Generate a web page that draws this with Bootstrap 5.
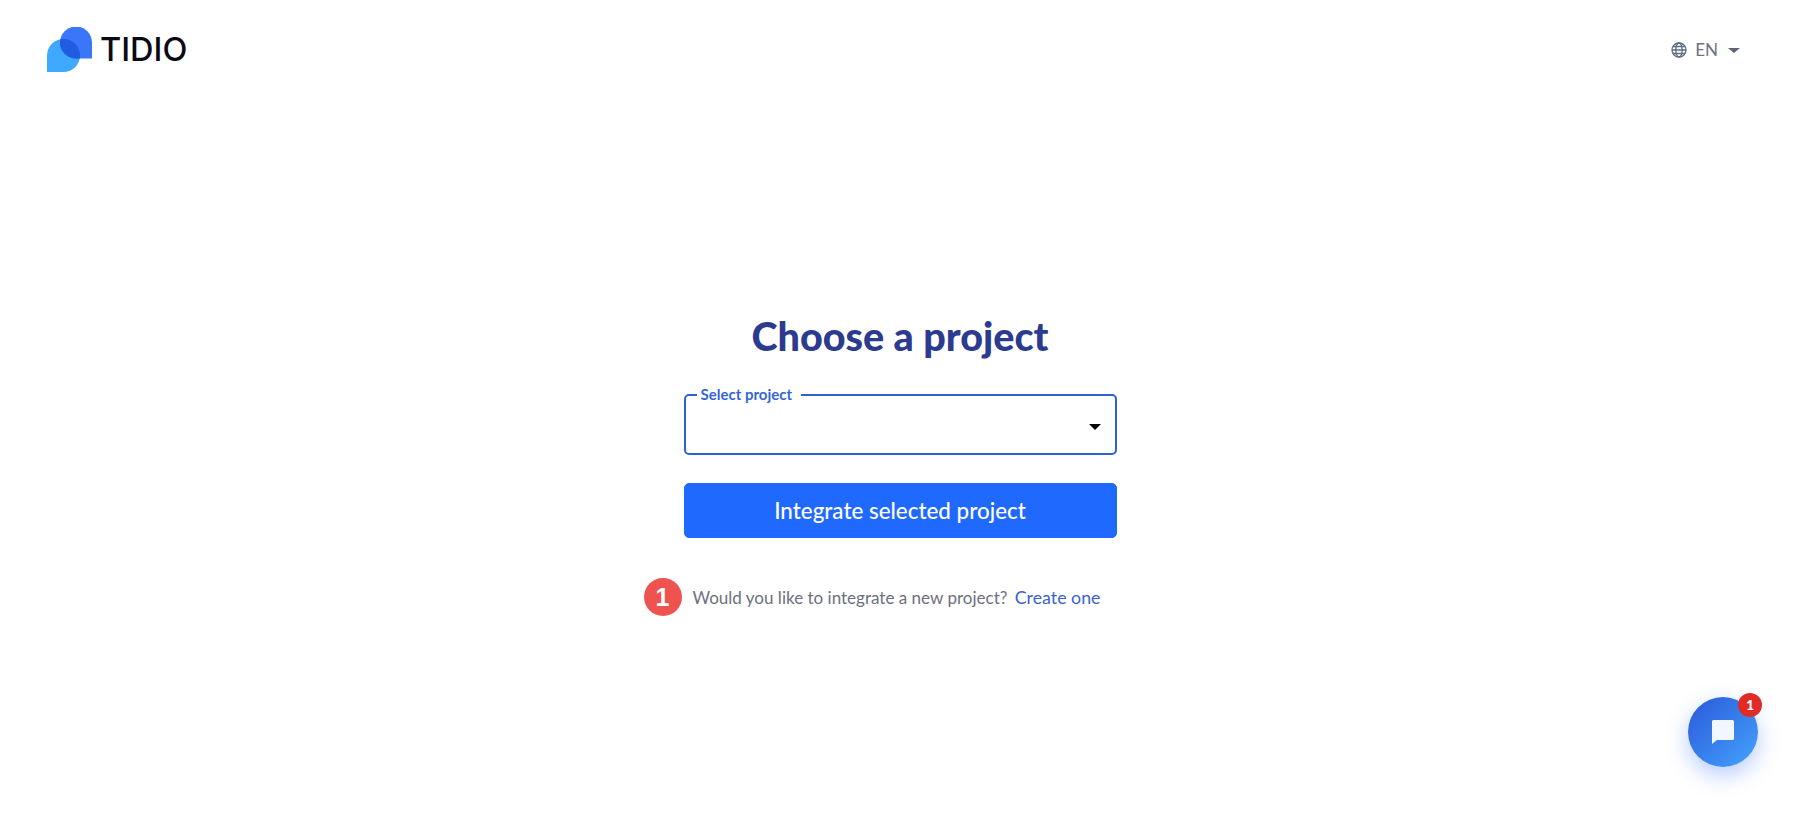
<!DOCTYPE html>
<html lang="en">
<head>
  <meta charset="UTF-8">
  <title>Choose a project</title>
  <link href="https://cdn.jsdelivr.net/npm/bootstrap@5.3.0/dist/css/bootstrap.min.css" rel="stylesheet">
  <style>
    body {
      background: #fff;
      font-family: Lato, "Liberation Sans", sans-serif;
      height: 813px;
      overflow: hidden;
    }

    .top-bar {
      height: 96px;
      padding: 0 60px 0 47px;
    }

    .brand-logo {
      margin-top: 4px;
    }

    .brand-name {
      font-family: Inter, "Liberation Sans", sans-serif;
      font-size: 32.5px;
      font-weight: 500;
      color: #0a0a14;
      line-height: 1;
      margin-left: 8px;
      margin-top: 5px;
    }

    .lang-pick {
      color: #6c7280;
      font-size: 17px;
      margin-top: 4px;
    }

    .lang-caret {
      border-left: 6px solid transparent;
      border-right: 6px solid transparent;
      border-top: 5px solid #5f6673;
      margin-left: 10px;
    }

    .project-box {
      width: 433px;
      margin: 214px auto 0;
    }

    .project-title {
      color: #2c3a8f;
      font-size: 39.5px;
      font-weight: 900;
      line-height: 52px;
      margin-bottom: 24px;
    }

    .project-field {
      height: 69px;
      border: 2px solid #2f62d0;
      border-radius: 5px;
      padding: 0 11px;
      margin: 0;
      min-width: 0;
      position: relative;
    }

    .project-field legend {
      float: none;
      width: auto;
      font-size: 15px;
      font-weight: 700;
      line-height: 16px;
      color: #3566d6;
      padding: 0 9px 2px 4px;
      margin: 0;
    }

    .field-caret {
      position: absolute;
      right: 14px;
      top: 20px;
      border-left: 6px solid transparent;
      border-right: 6px solid transparent;
      border-top: 6px solid #000;
    }

    .integrate-btn {
      display: block;
      width: 100%;
      height: 55px;
      margin-top: 28px;
      background: #1f69ff;
      border-color: #1f69ff;
      border-radius: 5px;
      font-size: 22.4px;
      font-weight: 500;
    }

    .new-project {
      position: relative;
      margin-top: 44px;
      padding-left: 9px;
      font-size: 17.05px;
      line-height: 30px;
      color: #6c7080;
      white-space: nowrap;
    }

    .new-project a {
      color: #3a62cc;
      font-size: 17.8px;
      text-decoration: none;
      margin-left: 3px;
    }

    .step-marker {
      position: absolute;
      left: -40px;
      top: -4px;
      width: 38px;
      height: 38px;
      border-radius: 50%;
      background: #ef5350;
      color: #fff;
      font-family: "Liberation Sans", sans-serif;
      font-size: 25px;
      font-weight: 700;
      line-height: 38px;
      text-align: center;
    }

    .chat-launcher {
      position: fixed;
      left: 1688px;
      top: 697px;
      width: 70px;
      height: 70px;
      border: 0;
      border-radius: 50%;
      background: linear-gradient(135deg, #2a58dc, #45a4fb);
      box-shadow: 0 8px 22px rgba(45, 105, 255, 0.35);
    }

    .chat-count {
      position: absolute;
      left: 50px;
      top: -4px;
      width: 24px;
      height: 24px;
      border-radius: 50%;
      background: #e02b27;
      color: #fff;
      font-size: 14px;
      font-weight: 900;
      line-height: 24px;
      text-align: center;
    }
  </style>
</head>
<body>

  <header class="top-bar d-flex align-items-center justify-content-between">
    <div class="d-flex align-items-center">
      <svg class="brand-logo" width="45" height="46" viewBox="0 0 45 46">
        <defs>
          <clipPath id="frontBubble">
            <path d="M45 31.500H29a16 16 0 1 1 16-16z"/>
          </clipPath>
        </defs>
        <path d="M0 45V28.500a16.500 16.500 0 1 1 16.500 16.500z" fill="#3fa9ff"/>
        <path d="M45 31.500H29a16 16 0 1 1 16-16z" fill="#3a76fa"/>
        <path d="M0 45V28.500a16.500 16.500 0 1 1 16.500 16.500z" fill="#1f5ce2" clip-path="url(#frontBubble)"/>
      </svg>
      <span class="brand-name">TIDIO</span>
    </div>
    <div class="lang-pick d-flex align-items-center">
      <svg class="me-2" width="16" height="16" viewBox="0 0 16 16" fill="none" stroke="#5f6b80" stroke-width="1.300">
        <circle cx="8" cy="8" r="7"/>
        <ellipse cx="8" cy="8" rx="3.200" ry="7"/>
        <path d="M1 8h14M2 4.500h12M2 11.500h12"/>
      </svg>
      <span>EN</span>
      <span class="lang-caret"></span>
    </div>
  </header>

  <main class="project-box">
    <h1 class="project-title text-center">Choose a project</h1>
    <fieldset class="project-field">
      <legend>Select project</legend>
      <span class="field-caret"></span>
    </fieldset>
    <button type="button" class="btn btn-primary integrate-btn">Integrate selected project</button>
    <p class="new-project">
      <span class="step-marker">1</span>
      Would you like to integrate a new project? <a href="#">Create one</a>
    </p>
  </main>

  <button type="button" class="chat-launcher" aria-label="Open chat">
    <svg width="24" height="26" viewBox="0 0 24 26">
      <path d="M2.500 1h19a1.500 1.500 0 0 1 1.500 1.500v17a1.500 1.500 0 0 1-1.500 1.500H6l-5 4V2.500A1.500 1.500 0 0 1 2.500 1z" fill="#f2f7ff"/>
    </svg>
    <span class="chat-count">1</span>
  </button>

  <script src="https://cdn.jsdelivr.net/npm/bootstrap@5.3.0/dist/js/bootstrap.bundle.min.js"></script>
</body>
</html>
